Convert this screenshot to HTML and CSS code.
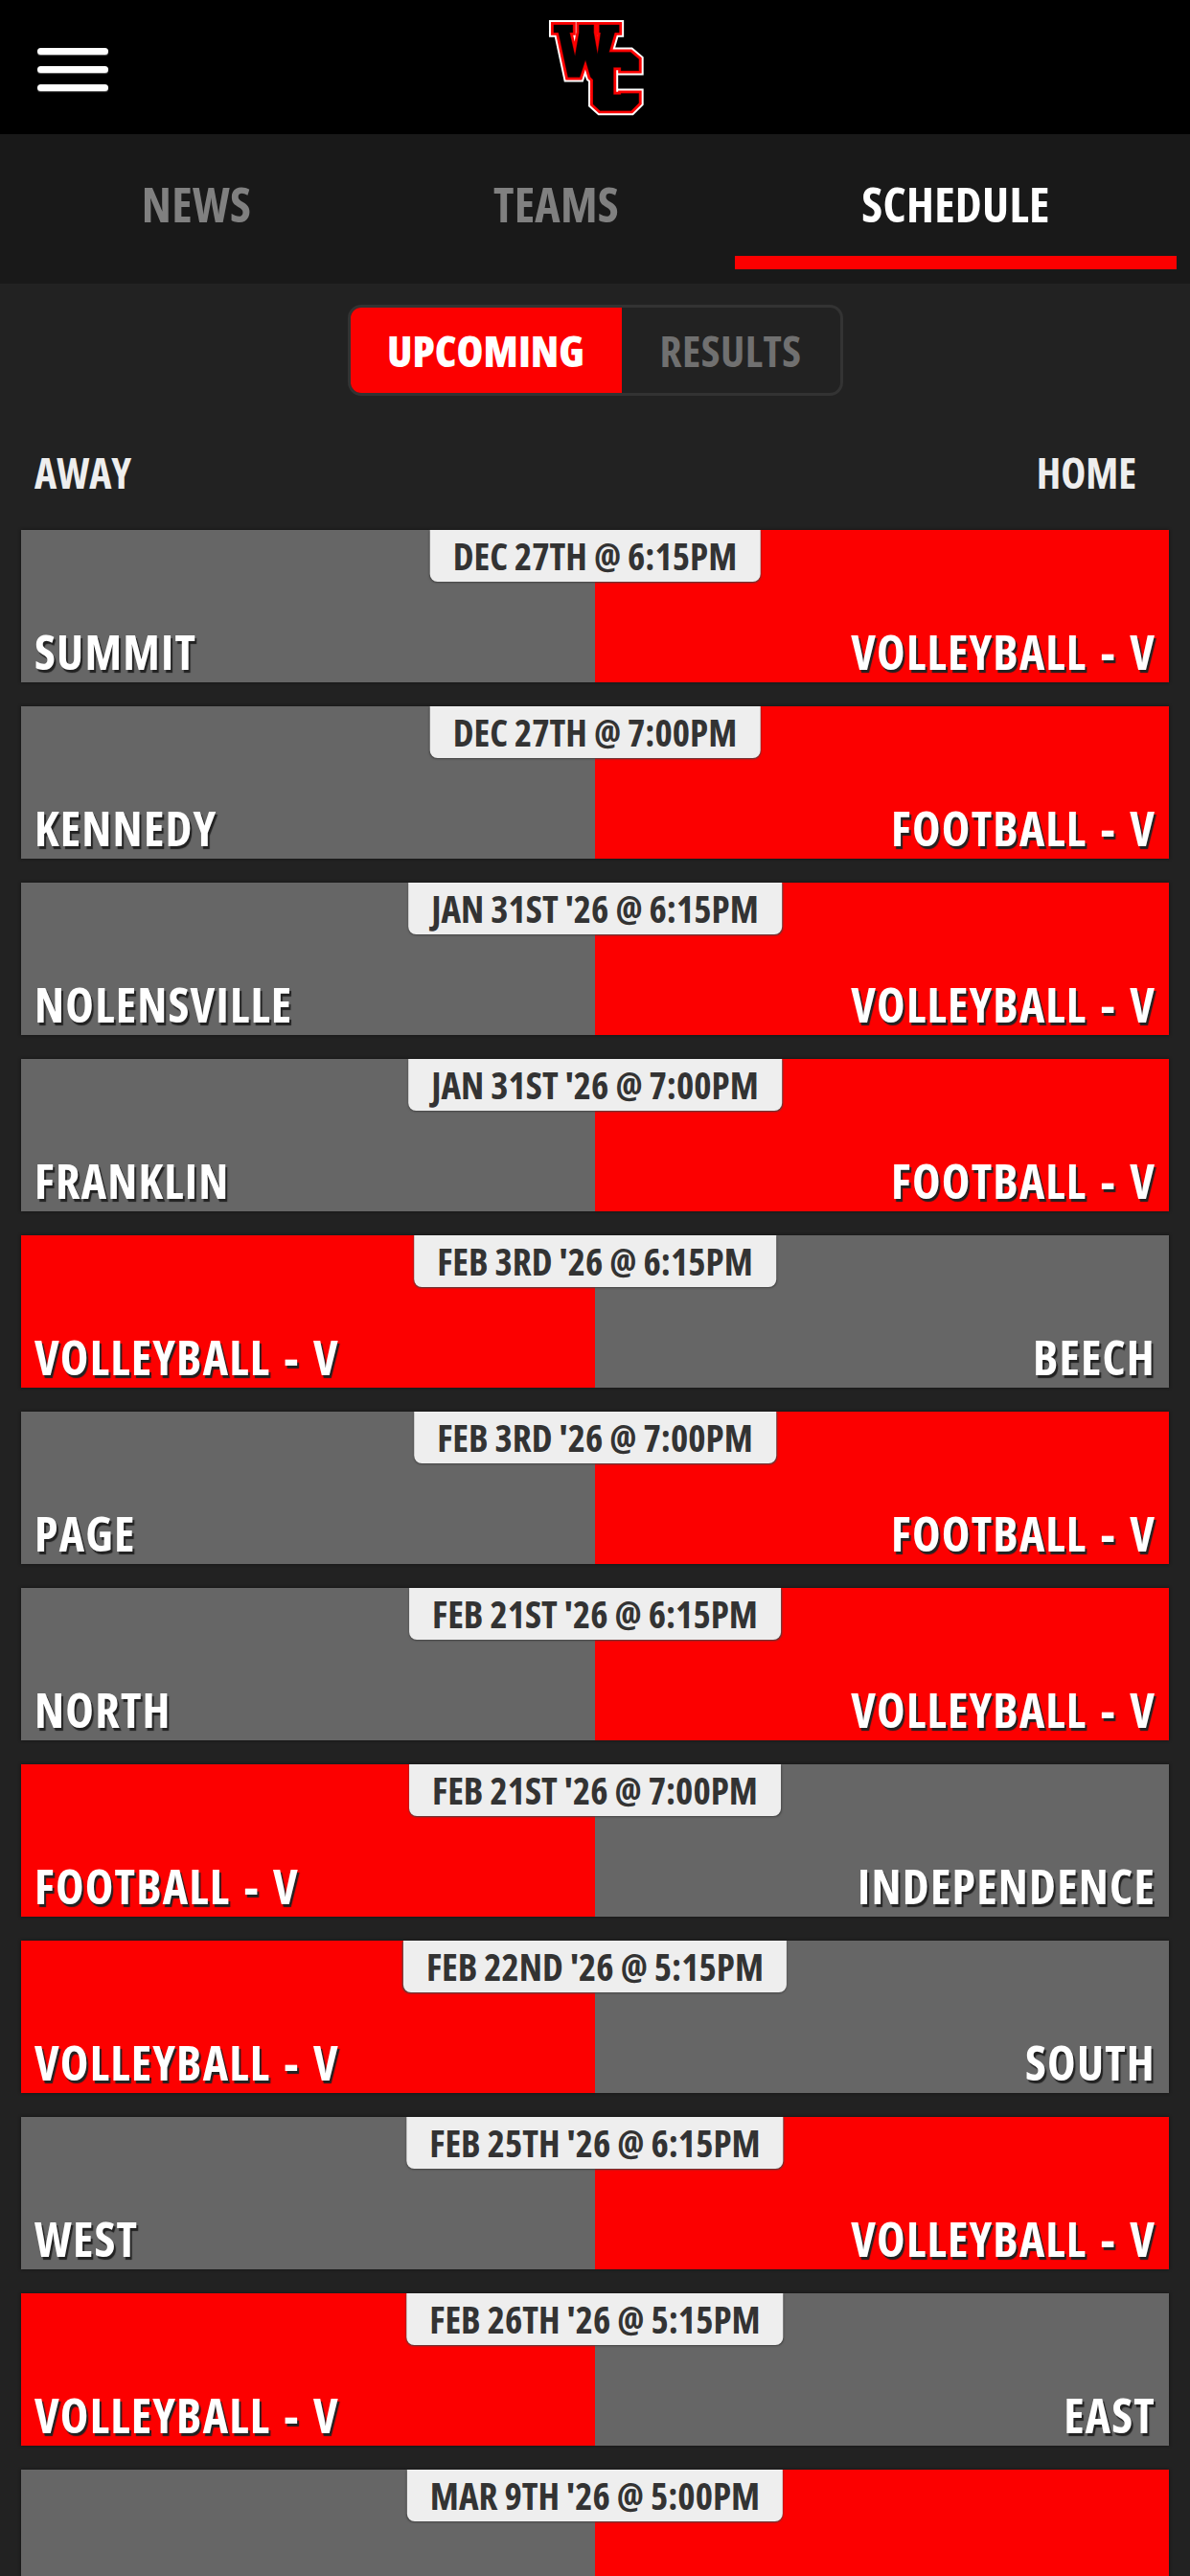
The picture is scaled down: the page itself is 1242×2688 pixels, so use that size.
FILE: index.html
```html
<!DOCTYPE html>
<html>
<head>
<meta charset="utf-8">
<title>Schedule</title>
<link rel="stylesheet" href="styles.css">
</head>
<body>
<div class="app">
  <div class="top-bar">
    <div class="burger"><span></span><span></span><span></span></div>
    <svg class="logo" viewBox="80 45 320 330" aria-label="WC">
      <defs>
        <g id="wc">
          <path d="M110 80H170V104H160L177 178L190 104V80H236V104L248 172L258 104H254V80H316V104H302L284 166H352L378 188V224H322V214H298V300H322V296H378V326L354 350H256L234 330V252L226 245L210 190L192 245H155L125 104H110Z"/>
        </g>
      </defs>
      <use href="#wc" class="logo-white"/>
      <use href="#wc" class="logo-red"/>
      <use href="#wc" class="logo-core"/>
    </svg>
    <div></div>
  </div>

  <div class="tabs">
    <div class="tab">NEWS</div>
    <div class="tab">TEAMS</div>
    <div class="tab active">SCHEDULE</div>
  </div>

  <div class="switch-wrap">
    <div class="switch">
      <div class="switch-btn on">UPCOMING</div>
      <div class="switch-btn">RESULTS</div>
    </div>
  </div>

  <div class="col-heads">
    <div>AWAY</div>
    <div>HOME</div>
  </div>

  <div class="games">
    <div class="game">
      <div class="date">DEC 27TH @ 6:15PM</div>
      <div class="side gray">SUMMIT</div>
      <div class="side red right">VOLLEYBALL - V</div>
    </div>
    <div class="game">
      <div class="date">DEC 27TH @ 7:00PM</div>
      <div class="side gray">KENNEDY</div>
      <div class="side red right">FOOTBALL - V</div>
    </div>
    <div class="game">
      <div class="date">JAN 31ST '26 @ 6:15PM</div>
      <div class="side gray">NOLENSVILLE</div>
      <div class="side red right">VOLLEYBALL - V</div>
    </div>
    <div class="game">
      <div class="date">JAN 31ST '26 @ 7:00PM</div>
      <div class="side gray">FRANKLIN</div>
      <div class="side red right">FOOTBALL - V</div>
    </div>
    <div class="game">
      <div class="date">FEB 3RD '26 @ 6:15PM</div>
      <div class="side red">VOLLEYBALL - V</div>
      <div class="side gray right">BEECH</div>
    </div>
    <div class="game">
      <div class="date">FEB 3RD '26 @ 7:00PM</div>
      <div class="side gray">PAGE</div>
      <div class="side red right">FOOTBALL - V</div>
    </div>
    <div class="game">
      <div class="date">FEB 21ST '26 @ 6:15PM</div>
      <div class="side gray">NORTH</div>
      <div class="side red right">VOLLEYBALL - V</div>
    </div>
    <div class="game">
      <div class="date">FEB 21ST '26 @ 7:00PM</div>
      <div class="side red">FOOTBALL - V</div>
      <div class="side gray right">INDEPENDENCE</div>
    </div>
    <div class="game">
      <div class="date">FEB 22ND '26 @ 5:15PM</div>
      <div class="side red">VOLLEYBALL - V</div>
      <div class="side gray right">SOUTH</div>
    </div>
    <div class="game">
      <div class="date">FEB 25TH '26 @ 6:15PM</div>
      <div class="side gray">WEST</div>
      <div class="side red right">VOLLEYBALL - V</div>
    </div>
    <div class="game">
      <div class="date">FEB 26TH '26 @ 5:15PM</div>
      <div class="side red">VOLLEYBALL - V</div>
      <div class="side gray right">EAST</div>
    </div>
    <div class="game">
      <div class="date">MAR 9TH '26 @ 5:00PM</div>
      <div class="side gray"></div>
      <div class="side red right"></div>
    </div>
  </div>
</div>
</body>
</html>
```

FILE: styles.css
```css
html, body { margin: 0; padding: 0; background: #222222; }
.app { width: 1242px; height: 2688px; overflow: hidden; font-family: "Open Sans", "Liberation Sans", sans-serif; font-stretch: 75%; font-weight: 700; }

.top-bar { height: 140px; background: #000000; display: grid; grid-template-columns: 1fr 100px 1fr; align-items: center; }
.burger { display: flex; flex-direction: column; gap: 12px; width: 74px; margin-left: 39px; margin-top: 5px; }
.burger span { display: block; height: 7px; border-radius: 4px; background: #ffffff; box-shadow: 0 1px 1px #666666; }
.logo { width: 106px; height: 110px; margin-left: -3px; margin-top: -3px; }
.logo use { stroke-linejoin: miter; }
.logo-white { fill: #fff; stroke: #fff; stroke-width: 30px; }
.logo-red { fill: #fc0000; stroke: #fc0000; stroke-width: 18px; }
.logo-core { fill: #000; stroke: #000; stroke-width: 1px; }

.tabs { height: 156px; box-sizing: border-box; background: #191919; padding: 0 14px 0 16px; display: grid; grid-template-columns: 378px 373px 461px; }
.tab { height: 141px; box-sizing: border-box; padding-top: 39px; text-align: center; font-size: 50px; line-height: 68px; letter-spacing: 0.3px; color: #808080; }
.tab.active { color: #ffffff; border-bottom: 14px solid #fc0000; }

.switch-wrap { display: flex; justify-content: center; padding-top: 22px; }
.switch { display: flex; height: 95px; box-sizing: border-box; border: 3px solid #333333; border-radius: 14px; overflow: hidden; }
.switch-btn { width: 228px; text-align: center; font-size: 45px; line-height: 89px; letter-spacing: 0.5px; color: #707070; }
.switch-btn.on { width: 283px; background: #fc0000; color: #ffffff; font-weight: 800; letter-spacing: 0; }

.col-heads { display: flex; justify-content: space-between; padding: 48px 56px 0 36px; height: 92px; font-size: 44px; line-height: 64px; color: #eeeeee; }

.games { display: flex; flex-direction: column; gap: 25px; padding: 0 22px; }
.game { position: relative; display: grid; grid-template-columns: 599px 599px; height: 159px; flex: none; box-shadow: 0 0 3px #111111; }
.side { display: flex; align-items: flex-end; justify-content: flex-start; padding: 0 14px 1px; font-size: 50px; line-height: 62px; letter-spacing: 1.2px; word-spacing: 4px; color: #ffffff; text-shadow: 2px 3px 1px #222222; }
.side.right { justify-content: flex-end; }
.side.gray { background: #666666; }
.side.red { background: #fc0000; }
.date { position: absolute; top: 0; left: 50%; transform: translateX(-50%); height: 54px; padding: 0 24px; background: #eeeeee; border-radius: 0 0 8px 8px; box-shadow: 0 1px 2px #444444; font-size: 39px; line-height: 54px; color: #333333; white-space: nowrap; }
```
